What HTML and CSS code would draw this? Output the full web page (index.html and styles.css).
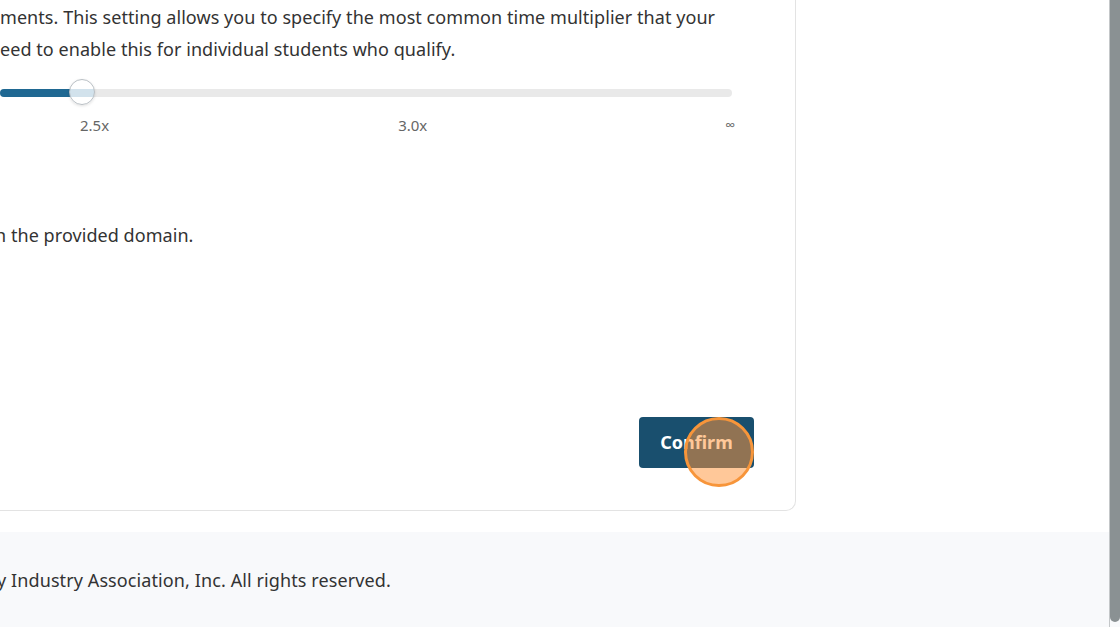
FILE: index.html
```html
<!DOCTYPE html>
<html lang="en">
<head>
<meta charset="utf-8">
<title>Settings</title>
<link rel="stylesheet" href="styles.css">
</head>
<body>
<div class="viewport">
  <div class="page">
    <main class="content">
      <section class="card">
        <p class="desc">ments. This setting allows you to specify the most common time multiplier that your<br>eed to enable this for individual students who qualify.</p>
        <div class="slider">
          <div class="track">
            <div class="fill" style="width: 82px"></div>
          </div>
          <div class="thumb"></div>
        </div>
        <div class="marks">
          <span class="mark m1">2.5x</span>
          <span class="mark m2">3.0x</span>
          <span class="mark m3">∞</span>
        </div>
        <p class="domain"><span class="clip">n</span> the provided domain.</p>
        <div class="actions">
          <button class="confirm" type="button">Confirm</button>
          <span class="cursor"></span>
        </div>
      </section>
    </main>
    <footer class="footer">
      <p class="copy"><span class="clip-y">y</span> Industry Association, Inc. All rights reserved.</p>
    </footer>
  </div>
  <div class="scrollbar"><div class="scroll-thumb"></div></div>
</div>
</body>
</html>
```

FILE: styles.css
```css
* { box-sizing: border-box; }
html, body {
  margin: 0;
  padding: 0;
  height: 100%;
  overflow: hidden;
}
body {
  font-family: "Noto Sans", "Open Sans", sans-serif;
  color: #333;
  background: #fff;
}
.viewport {
  display: flex;
  height: 627px;
  width: 1120px;
}
.page {
  width: 1109px;
  display: flex;
  flex-direction: column;
  overflow: hidden;
}
.content {
  height: 532px;
  background: #fff;
}
.card {
  width: 796px;
  height: 511px;
  border-right: 1px solid #e3e3e3;
  border-bottom: 1px solid #e3e3e3;
  border-bottom-right-radius: 10px;
  padding: 1px 41px 0 0;
  display: flex;
  flex-direction: column;
}
.desc {
  margin: 0;
  font-size: 18px;
  line-height: 32px;
  letter-spacing: 0.06px;
  color: #333;
  white-space: nowrap;
}
.slider {
  position: relative;
  margin-top: 14px;
  height: 26px;
  width: 732px;
  display: flex;
  align-items: center;
}
.track {
  width: 100%;
  height: 8px;
  border-radius: 4px;
  background: #e9e9e9;
  overflow: hidden;
  margin-top: 1px;
}
.fill {
  height: 100%;
  background: #1f6892;
}
.thumb {
  position: absolute;
  left: 69px;
  top: 0;
  width: 26px;
  height: 26px;
  border-radius: 50%;
  border: 1px solid #b9bfc4;
  background: linear-gradient(to bottom, #fff 0 37%, #d2e2ec 37% 70%, #fff 70%);
  box-shadow: 0 1px 3px rgba(0,0,0,0.12);
}
.marks {
  display: flex;
  align-items: center;
  margin-top: 10px;
  height: 20px;
  font-size: 15px;
  line-height: 20px;
  color: #666;
}
.m1 { margin-left: 80px; }
.m2 { margin-left: 289px; }
.m3 { margin-left: 298px; font-size: 14px; }
.domain {
  margin: 84px 0 0;
  font-size: 18px;
  line-height: 32px;
  letter-spacing: 0.06px;
  color: #333;
}
.clip {
  display: inline-block;
  margin-left: -5px;
}
.actions {
  position: relative;
  margin-top: auto;
  margin-bottom: 42px;
  display: flex;
  justify-content: flex-end;
}
.confirm {
  width: 115px;
  height: 51px;
  border: none;
  border-radius: 4px;
  background: #194f6e;
  color: #fff;
  font-family: "Noto Sans", "Open Sans", sans-serif;
  font-size: 18px;
  font-weight: 700;
  padding: 0 0 2px 0;
}
.cursor {
  position: absolute;
  left: 684px;
  top: 0;
  width: 70px;
  height: 70px;
  border-radius: 50%;
  border: 3px solid #f7953a;
  background: rgba(255, 150, 60, 0.52);
}
.footer {
  flex: 1;
  background: #f8f9fb;
  padding-top: 32px;
}
.copy {
  margin: 0;
  font-size: 18px;
  line-height: 32px;
  letter-spacing: 0.1px;
  color: #333;
  white-space: nowrap;
}
.clip-y {
  display: inline-block;
  margin-left: -3px;
}
.scrollbar {
  width: 11px;
  height: 627px;
  background: #f8f9fb;
  border-left: 1px solid #c4c7c9;
}
.scroll-thumb {
  height: 622px;
  background: #8a9193;
  border-radius: 0 0 5px 5px;
}
```
